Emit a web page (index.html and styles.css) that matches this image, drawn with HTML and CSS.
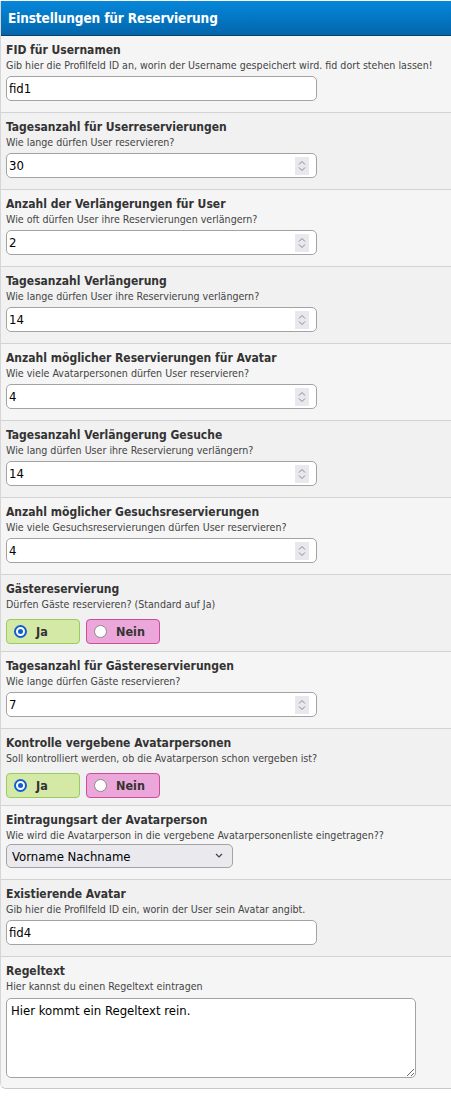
FILE: index.html
```html
<!DOCTYPE html>
<html lang="de">
<head>
<meta charset="utf-8">
<title>Einstellungen für Reservierung</title>
<link rel="stylesheet" href="styles.css">
</head>
<body>
<div class="panel">
  <div class="head">Einstellungen für Reservierung</div>

  <div class="row">
    <div class="lbl">FID für Usernamen</div>
    <div class="desc">Gib hier die Profilfeld ID an, worin der Username gespeichert wird. fid dort stehen lassen!</div>
    <input class="field" type="text" value="fid1">
  </div>

  <div class="row">
    <div class="lbl">Tagesanzahl für Userreservierungen</div>
    <div class="desc">Wie lange dürfen User reservieren?</div>
    <div class="numbox"><input class="numinput" type="text" value="30"><span class="spin"><svg width="14" height="18" viewBox="0 0 14 18"><path d="M4 7.5 L7 4.5 L10 7.5 M4 10.5 L7 13.5 L10 10.5" fill="none" stroke="#8a8a8a" stroke-width="1"/></svg></span></div>
  </div>

  <div class="row">
    <div class="lbl">Anzahl der Verlängerungen für User</div>
    <div class="desc">Wie oft dürfen User ihre Reservierungen verlängern?</div>
    <div class="numbox"><input class="numinput" type="text" value="2"><span class="spin"><svg width="14" height="18" viewBox="0 0 14 18"><path d="M4 7.5 L7 4.5 L10 7.5 M4 10.5 L7 13.5 L10 10.5" fill="none" stroke="#8a8a8a" stroke-width="1"/></svg></span></div>
  </div>

  <div class="row">
    <div class="lbl">Tagesanzahl Verlängerung</div>
    <div class="desc">Wie lange dürfen User ihre Reservierung verlängern?</div>
    <div class="numbox"><input class="numinput" type="text" value="14"><span class="spin"><svg width="14" height="18" viewBox="0 0 14 18"><path d="M4 7.5 L7 4.5 L10 7.5 M4 10.5 L7 13.5 L10 10.5" fill="none" stroke="#8a8a8a" stroke-width="1"/></svg></span></div>
  </div>

  <div class="row">
    <div class="lbl">Anzahl möglicher Reservierungen für Avatar</div>
    <div class="desc">Wie viele Avatarpersonen dürfen User reservieren?</div>
    <div class="numbox"><input class="numinput" type="text" value="4"><span class="spin"><svg width="14" height="18" viewBox="0 0 14 18"><path d="M4 7.5 L7 4.5 L10 7.5 M4 10.5 L7 13.5 L10 10.5" fill="none" stroke="#8a8a8a" stroke-width="1"/></svg></span></div>
  </div>

  <div class="row">
    <div class="lbl">Tagesanzahl Verlängerung Gesuche</div>
    <div class="desc">Wie lang dürfen User ihre Reservierung verlängern?</div>
    <div class="numbox"><input class="numinput" type="text" value="14"><span class="spin"><svg width="14" height="18" viewBox="0 0 14 18"><path d="M4 7.5 L7 4.5 L10 7.5 M4 10.5 L7 13.5 L10 10.5" fill="none" stroke="#8a8a8a" stroke-width="1"/></svg></span></div>
  </div>

  <div class="row">
    <div class="lbl">Anzahl möglicher Gesuchsreservierungen</div>
    <div class="desc">Wie viele Gesuchsreservierungen dürfen User reservieren?</div>
    <div class="numbox"><input class="numinput" type="text" value="4"><span class="spin"><svg width="14" height="18" viewBox="0 0 14 18"><path d="M4 7.5 L7 4.5 L10 7.5 M4 10.5 L7 13.5 L10 10.5" fill="none" stroke="#8a8a8a" stroke-width="1"/></svg></span></div>
  </div>

  <div class="row row-radio">
    <div class="lbl">Gästereservierung</div>
    <div class="desc">Dürfen Gäste reservieren? (Standard auf Ja)</div>
    <div class="choices">
      <label class="choice yes"><span class="radio on"></span>Ja</label>
      <label class="choice no"><span class="radio"></span>Nein</label>
    </div>
  </div>

  <div class="row">
    <div class="lbl">Tagesanzahl für Gästereservierungen</div>
    <div class="desc">Wie lange dürfen Gäste reservieren?</div>
    <div class="numbox"><input class="numinput" type="text" value="7"><span class="spin"><svg width="14" height="18" viewBox="0 0 14 18"><path d="M4 7.5 L7 4.5 L10 7.5 M4 10.5 L7 13.5 L10 10.5" fill="none" stroke="#8a8a8a" stroke-width="1"/></svg></span></div>
  </div>

  <div class="row row-radio">
    <div class="lbl">Kontrolle vergebene Avatarpersonen</div>
    <div class="desc">Soll kontrolliert werden, ob die Avatarperson schon vergeben ist?</div>
    <div class="choices">
      <label class="choice yes"><span class="radio on"></span>Ja</label>
      <label class="choice no"><span class="radio"></span>Nein</label>
    </div>
  </div>

  <div class="row row-select">
    <div class="lbl">Eintragungsart der Avatarperson</div>
    <div class="desc">Wie wird die Avatarperson in die vergebene Avatarpersonenliste eingetragen??</div>
    <div class="selectbox">
      <select class="sel"><option>Vorname Nachname</option></select>
      <svg class="chev" width="10" height="6" viewBox="0 0 10 6"><path d="M2 1 L5 4 L8 1" fill="none" stroke="#444" stroke-width="1.2"/></svg>
    </div>
  </div>

  <div class="row">
    <div class="lbl">Existierende Avatar</div>
    <div class="desc">Gib hier die Profilfeld ID ein, worin der User sein Avatar angibt.</div>
    <input class="field" type="text" value="fid4">
  </div>

  <div class="row row-last">
    <div class="lbl">Regeltext</div>
    <div class="desc">Hier kannst du einen Regeltext eintragen</div>
    <textarea class="area">Hier kommt ein Regeltext rein.</textarea>
  </div>
</div>
</body>
</html>
```

FILE: styles.css
```css
html, body {
  margin: 0;
  padding: 0;
  background: #ffffff;
  overflow: hidden;
}
body {
  padding-top: 1px;
  font-family: "DejaVu Sans Condensed", "DejaVu Sans", sans-serif;
  font-stretch: condensed;
  color: #333;
}
.panel {
  margin-right: -10px;
  border-left: 1px solid #d6d6d6;
  border-bottom: 1px solid #c8c8c8;
  border-radius: 0 0 6px 6px;
  overflow: hidden;
}
.head {
  height: 34px;
  line-height: 34px;
  padding-left: 8px;
  background: linear-gradient(#0687da, #0366ac);
  border-bottom: 1px solid #113d5f;
  color: #fff;
  font-weight: bold;
  font-size: 13.5px;
  letter-spacing: -0.12px;
  margin-left: -1px;
}
.row {
  padding: 7px 6px 11px 5px;
  border-bottom: 1px solid #d2d2d2;
  background: #f5f5f5;
}
.row:nth-child(odd) {
  background: #f1f1f1;
}
.row-radio {
  padding-bottom: 7px;
}
.row-last {
  border-bottom: 0;
  padding-bottom: 10px;
}
.lbl {
  font-size: 12px;
  font-weight: bold;
  line-height: 15px;
  color: #333;
}
.desc {
  font-size: 10.6px;
  line-height: 14px;
  color: #444;
}
.field, .numbox {
  display: flex;
  box-sizing: border-box;
  margin-top: 4px;
  width: 311px;
  height: 25px;
  border: 1px solid #a3a3a3;
  border-radius: 5px;
  background: #fff;
  font-family: inherit;
  font-stretch: condensed;
  font-size: 13px;
  color: #000;
  padding: 0 2px;
}
.numbox {
  align-items: center;
  padding: 0 7px 0 2px;
}
.numinput {
  flex: 1;
  min-width: 0;
  border: 0;
  padding: 0;
  outline: none;
  background: transparent;
  font-family: inherit;
  font-stretch: condensed;
  font-size: 13px;
  color: #000;
}
.spin {
  display: flex;
  width: 14px;
  height: 18px;
  background: #e8e8ee;
}
.choices {
  display: flex;
  gap: 6px;
  margin-top: 8px;
}
.choice {
  display: flex;
  align-items: center;
  box-sizing: border-box;
  width: 74px;
  height: 25px;
  padding-left: 7px;
  border-radius: 4px;
  font-size: 12.5px;
  font-weight: bold;
  color: #333;
}
.choice.yes {
  background: #d5e9a7;
  border: 1px solid #98cc5c;
}
.choice.no {
  background: #eba7d9;
  border: 1px solid #cf4c9d;
}
.radio {
  box-sizing: border-box;
  width: 13px;
  height: 13px;
  margin-right: 9px;
  border-radius: 50%;
  border: 1.5px solid #8a8a8a;
  background: #fff;
  display: flex;
  align-items: center;
  justify-content: center;
}
.radio.on {
  border: 2px solid #0f5fd3;
}
.radio.on::after {
  content: "";
  width: 5px;
  height: 5px;
  border-radius: 50%;
  background: #0f5fd3;
}
.row-select {
  padding-bottom: 11px;
}
.selectbox {
  position: relative;
  margin-top: 2px;
  width: 227px;
}
.sel {
  appearance: none;
  -webkit-appearance: none;
  box-sizing: border-box;
  display: block;
  width: 227px;
  height: 24px;
  border: 1px solid #a3a3a3;
  border-radius: 5px;
  background: #e9e9ee;
  padding: 0 5px;
  font-family: inherit;
  font-stretch: condensed;
  font-size: 13px;
  color: #000;
}
.chev {
  position: absolute;
  right: 9px;
  top: 9px;
}
.area {
  display: block;
  box-sizing: border-box;
  margin-top: 5px;
  width: 410px;
  height: 80px;
  border: 1px solid #a3a3a3;
  border-radius: 5px;
  background: #fff;
  padding: 4px 4px;
  font-family: inherit;
  font-stretch: condensed;
  font-size: 13px;
  color: #000;
  resize: both;
}
```
